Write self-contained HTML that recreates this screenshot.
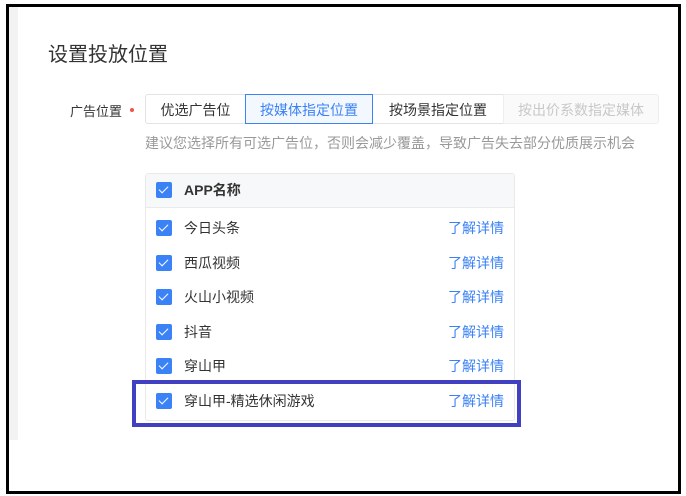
<!DOCTYPE html><html><head><meta charset="utf-8"><style>
body{margin:0;width:686px;height:496px;background:#fff;font-family:"Liberation Sans","Noto Sans CJK SC",sans-serif;position:relative;overflow:hidden}
.a{position:absolute}
.cb{position:absolute;left:156px;width:16px;height:16px;background:#3b82f6;border-radius:2px}
.cb:after{content:"";position:absolute;left:5px;top:2px;width:4px;height:8px;border:solid #fff;border-width:0 1.5px 1.5px 0;transform:rotate(45deg)}
.t{position:absolute;left:184px;font-size:14px;color:#333;line-height:16px}
.l{position:absolute;left:448px;font-size:14px;color:#3b82f6;line-height:16px}
.tab{position:absolute;top:94px;height:30px;line-height:30px;text-align:center;font-size:14px;color:#333;box-sizing:border-box;border:1px solid #e3e3e3}
</style></head><body>
<div class="a" style="left:6px;top:4px;width:669px;height:484px;border:3px solid #000"></div>
<div class="a" style="left:9px;top:7px;width:9px;height:433px;background:#f3f3f3"></div>
<div class="a" style="left:48px;top:38px;font-size:20px;color:#333">设置投放位置</div>
<div class="a" style="left:70px;top:101px;font-size:13px;color:#333">广告位置</div>
<div class="a" style="left:130px;top:108px;width:4px;height:4px;background:#e54;border-radius:2px"></div>
<div class="tab" style="left:145px;width:101px;border-radius:3px 0 0 3px">优选广告位</div>
<div class="tab" style="left:245px;width:128px;color:#3b82f6;border-color:#3b82f6;background:#f3f8ff;z-index:2">按媒体指定位置</div>
<div class="tab" style="left:372px;width:132px">按场景指定位置</div>
<div class="tab" style="left:503px;width:156px;color:#c8c8c8;background:#fafafa;border-color:#eee;border-radius:0 3px 3px 0">按出价系数指定媒体</div>
<div class="a" style="left:145px;top:133px;font-size:14px;color:#999">建议您选择所有可选广告位，否则会减少覆盖，导致广告失去部分优质展示机会</div>
<div class="a" style="left:145px;top:173px;width:370px;height:248px;border:1px solid #eaeaea;border-radius:3px;box-sizing:border-box"></div>
<div class="a" style="left:146px;top:174px;width:368px;height:33px;background:#f7f8fa;border-bottom:1px solid #eaeaea"></div>
<div class="cb" style="top:182px"></div><div class="t" style="top:182px;font-weight:bold">APP名称</div>
<div class="cb" style="top:220px"></div><div class="t" style="top:220px">今日头条</div><div class="l" style="top:220px">了解详情</div>
<div class="cb" style="top:255px"></div><div class="t" style="top:255px">西瓜视频</div><div class="l" style="top:255px">了解详情</div>
<div class="cb" style="top:289px"></div><div class="t" style="top:289px">火山小视频</div><div class="l" style="top:289px">了解详情</div>
<div class="cb" style="top:324px"></div><div class="t" style="top:324px">抖音</div><div class="l" style="top:324px">了解详情</div>
<div class="cb" style="top:358px"></div><div class="t" style="top:358px">穿山甲</div><div class="l" style="top:358px">了解详情</div>
<div class="cb" style="top:393px"></div><div class="t" style="top:393px">穿山甲-精选休闲游戏</div><div class="l" style="top:393px">了解详情</div>
<div class="a" style="left:132px;top:380px;width:389px;height:47px;border:4px solid #4040c0;box-sizing:border-box"></div>
</body></html>
